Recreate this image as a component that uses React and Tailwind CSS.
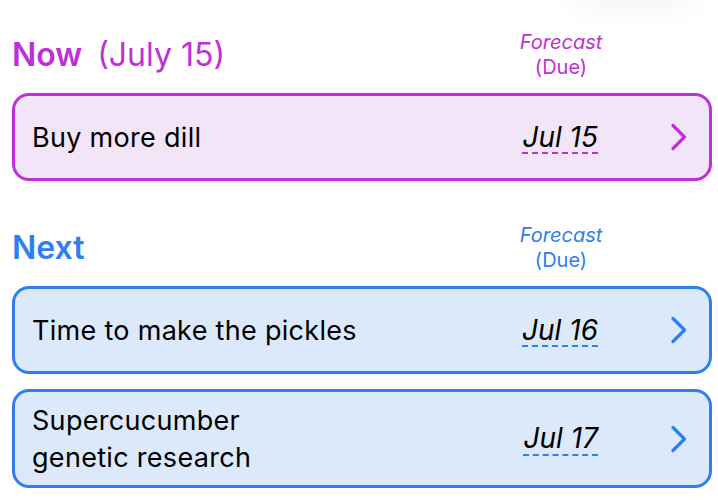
import { useState } from "react";

const themes = {
    purple: {
        heading: "text-[#c02fd8]",
        card: "border-[#bf30d8] bg-[#f3e5f8]",
        underline: "decoration-[#c02fd8]",
        chevron: "#bf30d8",
    },
    blue: {
        heading: "text-[#2f80ee]",
        card: "border-[#2f7fee] bg-[#dbe9fb]",
        underline: "decoration-[#2f80ee]",
        chevron: "#2f7fee",
    },
};

const sections = [
    {
        id: "now",
        title: "Now",
        subtitle: "(July 15)",
        theme: "purple",
        tasks: [{ id: 1, name: ["Buy more dill"], due: "Jul 15" }],
    },
    {
        id: "next",
        title: "Next",
        theme: "blue",
        tasks: [
            { id: 2, name: ["Time to make the pickles"], due: "Jul 16" },
            { id: 3, name: ["Supercucumber", "genetic research"], due: "Jul 17" },
        ],
    },
];

function Chevron({ color }) {
    return (
        <svg width="18" height="28" viewBox="0 0 18 28" fill="none">
            <path d="M3 2.5 L14.5 14 L3 25.5" stroke={color} strokeWidth="3.2" strokeLinecap="round" strokeLinejoin="round" />
        </svg>
    );
}

function SectionHeader({ section }) {
    const t = themes[section.theme];
    return (
        <div className={`flex items-center pl-[12px] pr-[6px] ${t.heading}`}>
            <div className="flex-1 flex items-baseline text-[32px] leading-[40px]">
                <span className="font-semibold">{section.title}</span>
                {section.subtitle && <span className="ml-[15px]">{section.subtitle}</span>}
            </div>
            <div className="w-[120px] text-center text-[20px] leading-[25px]">
                <div className="italic">Forecast</div>
                <div>(Due)</div>
            </div>
            <div className="w-[91px]" />
        </div>
    );
}

function TaskCard({ task, theme, onOpen }) {
    const t = themes[theme];
    return (
        <button
            onClick={() => onOpen(task.id)}
            className={`w-full flex items-center min-h-[88px] py-[9px] pl-[17px] pr-[21px] rounded-[17px] border-[3px] text-left ${t.card}`}
        >
            <div className="flex-1 text-[27px] leading-[37px] tracking-[0.3px] text-black pt-[1px]">
                {task.name.map((line) => (
                    <div key={line}>{line}</div>
                ))}
            </div>
            <div className="w-[120px] text-right">
                <span
                    className={`italic text-[28px] leading-[37px] text-black underline decoration-dashed decoration-[1.5px] underline-offset-[6px] ${t.underline}`}
                >
                    {task.due}
                </span>
            </div>
            <div className="ml-[72px] flex items-center">
                <Chevron color={t.chevron} />
            </div>
        </button>
    );
}

export default function App() {
    const [opened, setOpened] = useState(null);

    return (
        <div
            className="relative min-h-[500px] bg-white overflow-hidden"
            style={{ fontFamily: "Inter, 'Noto Sans', sans-serif" }}
            data-opened={opened ?? ""}
        >
            {/* faint shadow from the bar above */}
            <div className="absolute right-[24px] top-[-22px] w-[120px] h-[30px] rounded-full bg-black/[0.04] blur-md" />

            <div className="pt-[30px]">
                <SectionHeader section={sections[0]} />
                <div className="pl-[12px] pr-[6px] mt-[13px] flex flex-col gap-[15px]">
                    {sections[0].tasks.map((task) => (
                        <TaskCard key={task.id} task={task} theme={sections[0].theme} onOpen={setOpened} />
                    ))}
                </div>

                <div className="mt-[42px]">
                    <SectionHeader section={sections[1]} />
                </div>
                <div className="pl-[12px] pr-[6px] mt-[13px] flex flex-col gap-[15px]">
                    {sections[1].tasks.map((task) => (
                        <TaskCard key={task.id} task={task} theme={sections[1].theme} onOpen={setOpened} />
                    ))}
                </div>
            </div>
        </div>
    );
}
